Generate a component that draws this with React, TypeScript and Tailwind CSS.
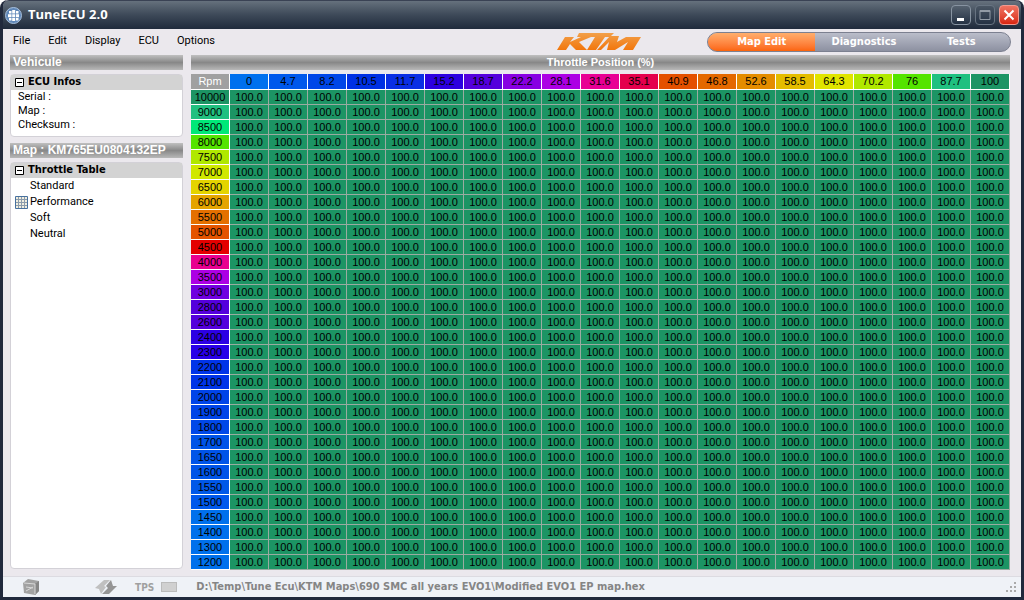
import React, { useState } from 'react';

const THROTTLE = [
  { label: '0', color: 'bg-[#0070ee]' },
  { label: '4.7', color: 'bg-[#0058ec]' },
  { label: '8.2', color: 'bg-[#0046e8]' },
  { label: '10.5', color: 'bg-[#0030e4]' },
  { label: '11.7', color: 'bg-[#0a2ee4]' },
  { label: '15.2', color: 'bg-[#2c00e0]' },
  { label: '18.7', color: 'bg-[#5400dc]' },
  { label: '22.2', color: 'bg-[#8800e2]' },
  { label: '28.1', color: 'bg-[#ac00e4]' },
  { label: '31.6', color: 'bg-[#e80094]' },
  { label: '35.1', color: 'bg-[#e4004c]' },
  { label: '40.9', color: 'bg-[#e45000]' },
  { label: '46.8', color: 'bg-[#e46800]' },
  { label: '52.6', color: 'bg-[#e48c00]' },
  { label: '58.5', color: 'bg-[#e4bc00]' },
  { label: '64.3', color: 'bg-[#e0e400]' },
  { label: '70.2', color: 'bg-[#b0e800]' },
  { label: '76', color: 'bg-[#54e400]' },
  { label: '87.7', color: 'bg-[#20c080]' },
  { label: '100', color: 'bg-[#1c9464]' },
];

const RPM = [
  { label: '10000', color: 'bg-[#1c9464]' },
  { label: '9000', color: 'bg-[#20c080]' },
  { label: '8500', color: 'bg-[#00e878]' },
  { label: '8000', color: 'bg-[#54e400]' },
  { label: '7500', color: 'bg-[#b0e800]' },
  { label: '7000', color: 'bg-[#d0e800]' },
  { label: '6500', color: 'bg-[#e4d400]' },
  { label: '6000', color: 'bg-[#e4a400]' },
  { label: '5500', color: 'bg-[#e47000]' },
  { label: '5000', color: 'bg-[#e45400]' },
  { label: '4500', color: 'bg-[#e40000]' },
  { label: '4000', color: 'bg-[#e80090]' },
  { label: '3500', color: 'bg-[#ac00e4]' },
  { label: '3000', color: 'bg-[#7000e0]' },
  { label: '2800', color: 'bg-[#5400dc]' },
  { label: '2600', color: 'bg-[#5400dc]' },
  { label: '2400', color: 'bg-[#2c00e4]' },
  { label: '2300', color: 'bg-[#2800e8]' },
  { label: '2200', color: 'bg-[#0034e8]' },
  { label: '2100', color: 'bg-[#0034e8]' },
  { label: '2000', color: 'bg-[#0044e8]' },
  { label: '1900', color: 'bg-[#0044e8]' },
  { label: '1800', color: 'bg-[#0048e8]' },
  { label: '1700', color: 'bg-[#0054e8]' },
  { label: '1650', color: 'bg-[#0054e8]' },
  { label: '1600', color: 'bg-[#0054e8]' },
  { label: '1550', color: 'bg-[#0058e8]' },
  { label: '1500', color: 'bg-[#0058ec]' },
  { label: '1450', color: 'bg-[#0070ec]' },
  { label: '1400', color: 'bg-[#0070ec]' },
  { label: '1300', color: 'bg-[#0070ec]' },
  { label: '1200', color: 'bg-[#0070ec]' },
];

const MENUS = ['File', 'Edit', 'Display', 'ECU', 'Options'];
const TABS = [
  { label: 'Map Edit', width: 'w-[108px]' },
  { label: 'Diagnostics', width: 'w-[98px]' },
  { label: 'Tests', width: 'w-[98px]' },
];
const TABLES = ['Standard', 'Performance', 'Soft', 'Neutral'];

function AppIcon() {
  return (
    <svg width="17" height="17" viewBox="0 0 17 17" aria-hidden="true">
      <circle cx="8.5" cy="8.5" r="8" fill="#5f87b8" stroke="#a9c1dd" />
      <path d="M4 4h2.5v2.5H4zM7.2 3h3v3.5h-3zM11 4h2.5v2.5H11zM3 7.2h3.5v3H3zM7.2 7.2h3v3h-3zM11 7.2h3v3h-3zM4 11h2.5v2.5H4zM7.2 11h3v3h-3zM11 11h2.5v2.5H11z" fill="#fff" />
    </svg>
  );
}

function KtmLogo() {
  return (
    <svg width="84" height="18" viewBox="0 0 84 18" role="img" aria-label="KTM">
      <defs>
        <linearGradient id="ktm" x1="0" y1="0" x2="0" y2="18" gradientUnits="userSpaceOnUse">
          <stop offset="0" stopColor="#f2a04a" />
          <stop offset="1" stopColor="#f27408" />
        </linearGradient>
      </defs>
      <g fill="url(#ktm)">
        <path d="M8 4h9l-4 5 11-5h10L22 9l8 8H19l-6-6-4 6H0z" />
        <path d="M22 0h35l-4 4h-5L39 17h-9l8-13H20z" />
        <path d="M53 3h9l-2 6 9-5h15l-8 13H66l5-8-13 8h-8l2-8-8 8h-4z" />
      </g>
    </svg>
  );
}

function SectionBar({ children, center = false }: { children: React.ReactNode; center?: boolean }) {
  return (
    <h2
      className={`h-[15px] overflow-hidden bg-linear-to-b from-[#c0c0c0] via-[#888888] to-[#b8b8b8] px-[3px] font-['Liberation_Sans'] leading-[15px] font-bold whitespace-nowrap text-white ${center ? 'text-center text-[11px]' : 'text-[12px]'}`}
    >
      {children}
    </h2>
  );
}

function TreeHeader({ children }: { children: React.ReactNode }) {
  return (
    <button type="button" className="flex h-[15px] w-full items-center gap-1 bg-[#d3d3d3] pl-1 font-['DejaVu_Sans_Condensed'] font-bold">
      <svg width="9" height="9" viewBox="0 0 9 9" aria-hidden="true">
        <path d="M.5.5h8v8h-8zM2 4.5h5" fill="#fff" stroke="#000" />
      </svg>
      {children}
    </button>
  );
}

function GridIcon() {
  return (
    <svg width="13" height="13" viewBox="0 0 13 13" aria-hidden="true">
      <path d="M.5.5h12v12H.5z" fill="#f0eee0" stroke="#47719f" />
      <path d="M3.5 1v11M6.5 1v11M9.5 1v11M1 3.5h11M1 6.5h11M1 9.5h11" stroke="#8c9cac" />
    </svg>
  );
}

export default function App() {
  const [tab, setTab] = useState('Map Edit');
  const [table, setTable] = useState('Performance');

  return (
    <div className="flex min-h-screen flex-col rounded-t-lg border-x-3 border-b-3 border-[#20293c] bg-[#ebe8ed] font-['Roboto',sans-serif] text-[11px] text-black">
      {/* Title bar */}
      <header className="flex h-[29px] items-center gap-1 rounded-t-md border-t border-[#3a4254] bg-linear-to-b from-[#66717d] via-[#3d4958] to-[#202b3c] pr-[2px] pl-[2px]">
        <AppIcon />
        <h1 className="flex-1 pl-[2px] font-['Open_Sans'] text-[13px] font-bold text-white">TuneECU 2.0</h1>
        <div className="flex gap-1">
          <button type="button" aria-label="Minimize" className="flex h-5 w-5 items-center justify-center rounded-sm border border-[#8793a1] bg-linear-to-b from-[#566270] to-[#253244]">
            <svg width="16" height="16" viewBox="0 0 16 16"><path d="M4 11h7v3H4z" fill="#fff" /></svg>
          </button>
          <button type="button" aria-label="Maximize" className="flex h-5 w-5 items-center justify-center rounded-sm border border-[#687482] bg-linear-to-b from-[#4a5664] to-[#253244]">
            <svg width="16" height="16" viewBox="0 0 16 16"><path d="M3 3.5h10v9H3zM3 4.5h10" fill="none" stroke="#929ba6" /></svg>
          </button>
          <button type="button" aria-label="Close" className="flex h-5 w-5 items-center justify-center rounded-sm border border-[#f19a90] bg-linear-to-b from-[#ee7261] to-[#d9230c]">
            <svg width="16" height="16" viewBox="0 0 16 16"><path d="M3.500 3.500l9 9M12.500 3.500l-9 9" stroke="#fff" strokeWidth="2" /></svg>
          </button>
        </div>
      </header>

      {/* Menu, logo and mode switch */}
      <div className="flex h-[26px] items-center px-[10px]">
        <nav className="flex flex-1 gap-[18px] pb-[2px]">
          {MENUS.map((item) => (
            <button key={item} type="button">{item}</button>
          ))}
        </nav>
        <KtmLogo />
        <div className="ml-[66px] flex h-5 w-[304px] overflow-hidden rounded-full border border-[#7c8090] bg-linear-to-b from-[#babdca] to-[#8d91a1]">
          {TABS.map((item) => (
            <button
              key={item.label}
              type="button"
              onClick={() => setTab(item.label)}
              className={`${item.width} font-['DejaVu_Sans_Condensed'] text-[11px] font-bold text-white ${tab === item.label ? 'bg-linear-to-b from-[#ffae6c] to-[#fb6408]' : ''}`}
            >
              {item.label}
            </button>
          ))}
        </div>
      </div>

      <main className="flex flex-1 gap-2 pr-[11px] pb-[6px] pl-[7px]">
        {/* Sidebar */}
        <aside className="flex w-[173px] shrink-0 flex-col pb-px">
          <SectionBar>Vehicule</SectionBar>
          <section className="mt-1 h-[63px] rounded-sm border border-[#d3d1d7] bg-white">
            <TreeHeader>ECU Infos</TreeHeader>
            <ul className="pl-[7px] leading-[14px]">
              <li>Serial :</li>
              <li>Map :</li>
              <li>Checksum :</li>
            </ul>
          </section>
          <div className="mt-[6px]">
            <SectionBar>Map : KM765EU0804132EP</SectionBar>
          </div>
          <section className="mt-1 flex-1 rounded-sm border border-[#d3d1d7] bg-white">
            <TreeHeader>Throttle Table</TreeHeader>
            <ul>
              {TABLES.map((item) => (
                <li key={item}>
                  <button type="button" onClick={() => setTable(item)} className="flex h-4 w-full items-center gap-[2px] pl-1 leading-4">
                    <span className="w-[13px]">{table === item && <GridIcon />}</span>
                    {item}
                  </button>
                </li>
              ))}
            </ul>
          </section>
        </aside>

        {/* Throttle map */}
        <section className="min-w-0 flex-1">
          <SectionBar center>Throttle Position (%)</SectionBar>
          <table className="mt-1 w-full table-fixed border-separate border-spacing-0 text-center font-['Liberation_Sans'] text-[11px] leading-[14px]">
            <thead className="leading-[15px]">
              <tr>
                <th className="border-r border-b border-white bg-[#a0a0a0] p-0 font-normal text-white">Rpm</th>
                {THROTTLE.map((col) => (
                  <th key={col.label} className={`border-r border-b border-white p-0 font-normal ${col.color}`}>{col.label}</th>
                ))}
              </tr>
            </thead>
            <tbody>
              {RPM.map((row) => (
                <tr key={row.label}>
                  <th className={`border-r border-b border-white p-0 font-normal ${row.color}`}>{row.label}</th>
                  {THROTTLE.map((col) => (
                    <td key={col.label} className="border-r border-b border-[#9aaba1] bg-[#1c9464] p-0">100.0</td>
                  ))}
                </tr>
              ))}
            </tbody>
          </table>
        </section>
      </main>

      {/* Status bar */}
      <footer className="flex h-[21px] items-center border-t border-[#dcdbe1] bg-[#eff2f7] pr-1 pl-5 font-['DejaVu_Sans_Condensed'] text-[11px] font-bold text-[#858585]">
        <svg width="16" height="16" viewBox="0 0 16 16" aria-hidden="true">
          <path d="M0 4l5-4 11 2v10l-4 4-11-2z" fill="#a2a2a2" />
          <path d="M12 5l4-3v10l-4 4z" fill="#868686" />
          <path d="M1 4l11 1v10M3 8l7 1M3 12l7-4" stroke="#d8d8d8" fill="none" />
        </svg>
        <svg className="ml-[56px]" width="22" height="16" viewBox="0 0 22 16" aria-hidden="true">
          <path d="M0 9l9-8h6l-6 6 2 1-5 7-2-5z" fill="#c0c0c0" />
          <path d="M22 7l-8 8H7l6-6-2-2 5-6 2 6z" fill="#959595" />
        </svg>
        <span className="ml-[18px] font-['DejaVu_Sans_Condensed'] text-[10px] text-[#a0a0a0]">TPS</span>
        <span className="ml-[7px] h-[10px] w-4 border border-[#bbb] bg-[#d0d0d0]" />
        <span className="ml-[19px] flex-1">D:\Temp\Tune Ecu\KTM Maps\690 SMC all years EVO1\Modified EVO1 EP map.hex</span>
        <svg width="11" height="11" viewBox="0 0 11 11" aria-hidden="true">
          <path d="M8 0h2v2H8zM4 4h2v2H4zM8 4h2v2H8zM0 8h2v2H0zM4 8h2v2H4zM8 8h2v2H8z" fill="#aaa" />
        </svg>
      </footer>
    </div>
  );
}
